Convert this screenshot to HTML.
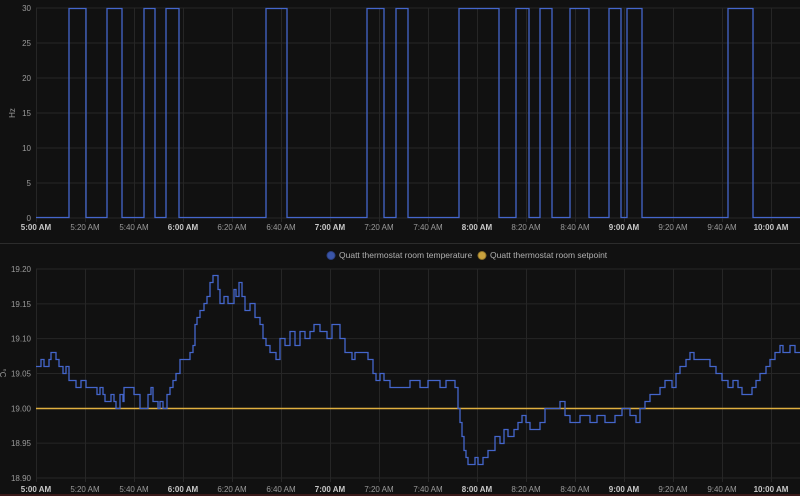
<!DOCTYPE html>
<html><head><meta charset="utf-8"><style>
html,body{margin:0;padding:0;background:#111111;width:800px;height:496px;overflow:hidden;font-family:"Liberation Sans",sans-serif}
svg{position:absolute;left:0;top:0}
text{font-family:"Liberation Sans",sans-serif;font-size:8px;fill:#9a9a9a}
.b{font-weight:bold;fill:#c8c8c8}
</style></head><body>
<svg id="s" width="800" height="496" viewBox="0 0 800 496"></svg>
<script>
var s=document.getElementById('s'),h='';
var xs=[36,85,134,183,232,281,330,379,428,477,526,575,624,673,722,771];
var lab=['5:00 AM','5:20 AM','5:40 AM','6:00 AM','6:20 AM','6:40 AM','7:00 AM','7:20 AM','7:40 AM','8:00 AM','8:20 AM','8:40 AM','9:00 AM','9:20 AM','9:40 AM','10:00 AM'];
function grid(top,bot,ylabs,fmt,ly){
 for(var i=0;i<ylabs.length;i++){var y=top+(bot-top)*i/(ylabs.length-1);
  h+='<line x1="36" x2="800" y1="'+y+'" y2="'+y+'" stroke="#262626" stroke-width="1"/>';
  h+='<text x="31" y="'+(y+3)+'" text-anchor="end">'+ylabs[i]+'</text>';}
 for(var i=0;i<xs.length;i++){h+='<line x1="'+(xs[i]+.5)+'" x2="'+(xs[i]+.5)+'" y1="'+top+'" y2="'+(bot+4)+'" stroke="#262626"/>';
  var bold=lab[i].indexOf(':00')>0;
  h+='<text x="'+xs[i]+'" y="'+ly+'" text-anchor="middle"'+(bold?' class="b"':'')+'>'+lab[i]+'</text>';}
}
grid(8,218,['30','25','20','15','10','5','0'],0,230);
h+='<text x="0" y="0" transform="translate(15,113) rotate(-90)" text-anchor="middle">Hz</text>';
var p=[[69,86],[107,122],[144,155],[166,179],[266,287],[367,384],[396,408],[459,499],[516,529],[540,552],[570,589],[609,621],[627,642],[728,753]];
var d='M36 217.5';p.forEach(function(q){d+=' H'+q[0]+' V8.5 H'+q[1]+' V217.5'});d+=' H800';
h+='<path d="'+d+'" fill="none" stroke="#4466cc" stroke-width="1.3"/>';
h+='<line x1="0" x2="800" y1="243.5" y2="243.5" stroke="#2c2c2c"/>';
grid(269,478,['19.20','19.15','19.10','19.05','19.00','18.95','18.90'],0,492);
h+='<text x="0" y="0" transform="translate(0,373) rotate(90)" text-anchor="middle">°C</text>';
h+='<circle cx="331" cy="255.5" r="4" fill="#3a55a8" stroke="#2b3f80"/><text x="339" y="258" style="font-size:8.5px;fill:#b0b0b0">Quatt thermostat room temperature</text>';
h+='<circle cx="482" cy="255.5" r="4" fill="#c9a23e" stroke="#8e7228"/><text x="490" y="258" style="font-size:8.5px;fill:#b0b0b0">Quatt thermostat room setpoint</text>';
h+='<line x1="36" x2="800" y1="408.5" y2="408.5" stroke="#e0b040" stroke-width="1.5"/>';
var t=[36,19.06,41,19.07,44,19.06,49,19.07,51,19.08,56,19.07,59,19.06,63,19.05,66,19.06,69,19.04,76,19.03,81,19.04,86,19.03,97,19.02,100,19.03,103,19.02,105,19.01,111,19.02,114,19.01,116,19.0,120,19.02,123,19.01,124,19.03,134,19.02,140,19.0,148,19.02,151,19.03,153,19.01,158,19.0,160,19.01,163,19.0,167,19.02,170,19.03,173,19.04,176,19.05,180,19.07,190,19.08,193,19.09,195,19.12,197,19.13,200,19.14,204,19.15,207,19.16,210,19.18,213,19.19,218,19.17,220,19.15,224,19.16,228,19.15,234,19.17,236,19.16,239,19.18,242,19.16,245,19.14,250,19.15,255,19.13,260,19.12,263,19.10,266,19.09,270,19.08,276,19.07,280,19.1,285,19.09,290,19.11,295,19.09,300,19.11,305,19.10,310,19.11,314,19.12,320,19.11,327,19.10,332,19.12,340,19.10,345,19.08,352,19.07,355,19.08,368,19.07,373,19.05,376,19.04,380,19.05,384,19.04,390,19.03,410,19.04,420,19.03,428,19.04,440,19.03,446,19.04,455,19.03,458,19.0,460,18.98,462,18.96,464,18.94,466,18.93,468,18.92,475,18.93,478,18.92,483,18.93,488,18.94,495,18.96,500,18.95,504,18.97,508,18.96,514,18.97,518,18.98,522,18.99,526,18.98,530,18.97,540,18.98,545,19.0,552,19.0,560,19.01,565,18.99,570,18.98,580,18.99,590,18.98,597,18.99,605,18.98,615,18.99,622,19.0,630,18.99,636,18.98,640,19.0,645,19.01,650,19.02,660,19.03,665,19.04,672,19.03,676,19.05,680,19.06,686,19.07,690,19.08,694,19.07,710,19.06,716,19.05,722,19.04,728,19.03,733,19.04,738,19.03,742,19.02,752,19.03,756,19.04,760,19.05,766,19.06,770,19.07,775,19.08,780,19.09,783,19.08,790,19.09,795,19.08,800,19.08];
function Y(v){return (408.5-(v-19)*700).toFixed(1)}
var d2='M'+t[0]+' '+Y(t[1]);for(var i=2;i<t.length;i+=2){d2+=' H'+t[i]+' V'+Y(t[i+1]);}
h+='<path d="'+d2+'" fill="none" stroke="#4466cc" stroke-width="1.3"/>';
h+='<rect x="0" y="494" width="800" height="2" fill="#3a1a1a"/>';
s.innerHTML=h;
</script>
</body></html>
